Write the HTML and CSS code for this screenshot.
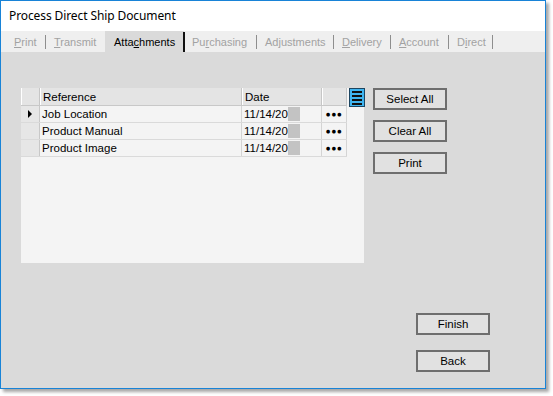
FILE: index.html
```html
<!DOCTYPE html>
<html>
<head>
<meta charset="utf-8">
<link rel="stylesheet" href="styles.css">
</head>
<body>
<div class="window">
  <div class="titlebar">Process Direct Ship Document</div>
  <div class="tabstrip">
    <div class="tab t1"><span class="dis"><u>P</u>rint</span><i class="sep"></i></div>
    <div class="tab t2"><span class="dis"><u>T</u>ransmit</span></div>
    <div class="tab t3 active"><span>Atta<u>c</u>hments</span><i class="sep dark"></i></div>
    <div class="tab t4"><span class="dis">Pu<u>r</u>chasing</span><i class="sep"></i></div>
    <div class="tab t5"><span class="dis">Ad<u>j</u>ustments</span><i class="sep"></i></div>
    <div class="tab t6"><span class="dis"><u>D</u>elivery</span><i class="sep"></i></div>
    <div class="tab t7"><span class="dis"><u>A</u>ccount</span><i class="sep"></i></div>
    <div class="tab t8"><span class="dis">D<u>i</u>rect</span><i class="sep"></i></div>
  </div>
  <div class="content">
    <div class="toprow">
      <div class="gridpanel">
        <div class="grid">
          <div class="row head">
            <div class="c rh"></div>
            <div class="c ref">Reference</div>
            <div class="c date">Date</div>
            <div class="c dots"></div>
          </div>
          <div class="row">
            <div class="c rh"><span class="arrow"></span></div>
            <div class="c ref">Job Location</div>
            <div class="c date">11/14/20<span class="blk"></span></div>
            <div class="c dots">&#9679;&#9679;&#9679;</div>
          </div>
          <div class="row">
            <div class="c rh"></div>
            <div class="c ref">Product Manual</div>
            <div class="c date">11/14/20<span class="blk"></span></div>
            <div class="c dots">&#9679;&#9679;&#9679;</div>
          </div>
          <div class="row">
            <div class="c rh"></div>
            <div class="c ref">Product Image</div>
            <div class="c date">11/14/20<span class="blk"></span></div>
            <div class="c dots">&#9679;&#9679;&#9679;</div>
          </div>
        </div>
        <div class="menuicon">
          <svg width="16" height="19" viewBox="0 0 16 19">
            <rect x="0.5" y="0.5" width="15" height="18" fill="#3fb4ef" stroke="#1d4560"/>
            <rect x="3" y="3" width="10" height="2" fill="#111"/>
            <rect x="3" y="7" width="10" height="2" fill="#111"/>
            <rect x="3" y="11" width="10" height="2" fill="#111"/>
            <rect x="3" y="15" width="10" height="2" fill="#111"/>
          </svg>
        </div>
      </div>
      <div class="btncol">
        <button class="btn">Select All</button>
        <button class="btn">Clear All</button>
        <button class="btn">Print</button>
      </div>
    </div>
    <div class="bottombtns">
      <button class="btn">Finish</button>
      <button class="btn">Back</button>
    </div>
  </div>
</div>
</body>
</html>
```

FILE: styles.css
```css
html, body {
  margin: 0;
  padding: 0;
  background: #ffffff;
  width: 553px;
  height: 396px;
  overflow: hidden;
}
.window {
  width: 544px;
  height: 387px;
  border: 1px solid #1883d7;
  background: #dadada;
  box-shadow: 3px 3px 3px rgba(0,0,0,0.35);
  display: flex;
  flex-direction: column;
  font-family: "Liberation Sans", Arial, sans-serif;
  font-size: 11.5px;
  color: #000;
}
.titlebar {
  height: 30px;
  background: #ffffff;
  font-family: "Noto Sans", "Open Sans", sans-serif;
  font-size: 12px;
  line-height: 30px;
  padding-left: 8px;
  color: #000;
  letter-spacing: -0.1px;
}
.tabstrip {
  height: 21px;
  background: #efefef;
  display: flex;
  font-size: 11px;
}
.tab {
  position: relative;
  display: flex;
  align-items: center;
  padding-left: 8px;
  box-sizing: border-box;
  white-space: nowrap;
  padding-top: 1px;
}
.tab .dis { color: #a2a2a2; }
.tab u { text-decoration: underline; text-underline-offset: 1px; }
.t1 { width: 45px; padding-left: 13px; }
.t2 { width: 59px; }
.t3 { width: 79px; padding-left: 9px; background: #dadada; }
.t4 { width: 73px; }
.t5 { width: 77px; }
.t6 { width: 57px; }
.t7 { width: 58px; }
.t8 { width: 44px; }
.sep {
  position: absolute;
  right: 0;
  top: 4px;
  height: 14px;
  width: 1px;
  background: #8e8e8e;
}
.sep.dark {
  top: 1px;
  height: 20px;
  width: 2px;
  right: -1px;
  background: #111;
}
.content {
  flex: 1;
  padding: 36px 0 0 20px;
  display: flex;
  flex-direction: column;
}
.toprow {
  display: flex;
  align-items: flex-start;
}
.gridpanel {
  width: 343px;
  height: 175px;
  background: #f4f4f4;
  display: flex;
  align-items: flex-start;
}
.grid {
  display: flex;
  flex-direction: column;
}
.row {
  display: flex;
  height: 16px;
  border-bottom: 1px solid #dadada;
}
.row.head {
  height: 17px;
  border-bottom: 1px solid #c8c8c8;
}
.c {
  box-sizing: border-box;
  border-right: 1px solid #d4d4d4;
  display: flex;
  align-items: center;
  padding-left: 2px;
  white-space: nowrap;
  line-height: 16px;
}
.head .c { background: #e4e4e4; border-right: 1px solid #c6c6c6; border-left: 1px solid #ffffff; }
.rh { width: 19px; background: #e6e6e6; justify-content: center; padding-left: 0; border-right: 1px solid #c8c8c8; }
.ref { width: 202px; color: #000; }
.date { width: 80px; }
.dots { width: 25px; justify-content: center; padding-left: 0; font-size: 8.5px; letter-spacing: 0.5px; color: #000; }
.blk {
  display: inline-block;
  width: 12px;
  height: 14px;
  background: #c3c3c3;
}
.arrow {
  width: 0;
  height: 0;
  border-top: 4px solid transparent;
  border-bottom: 4px solid transparent;
  border-left: 4px solid #000;
}
.menuicon {
  margin-left: 2px;
  height: 19px;
  display: flex;
}
.btncol {
  margin-left: 9px;
  display: flex;
  flex-direction: column;
  gap: 10px;
}
.btn {
  width: 74px;
  height: 22px;
  background: #e1e1e1;
  border: 2px solid #6e6e6e;
  font-family: "Liberation Sans", Arial, sans-serif;
  font-size: 11.5px;
  color: #000;
  padding: 0;
  margin: 0;
}
.bottombtns {
  margin-top: 50px;
  margin-left: 395px;
  display: flex;
  flex-direction: column;
  gap: 15px;
}
```
